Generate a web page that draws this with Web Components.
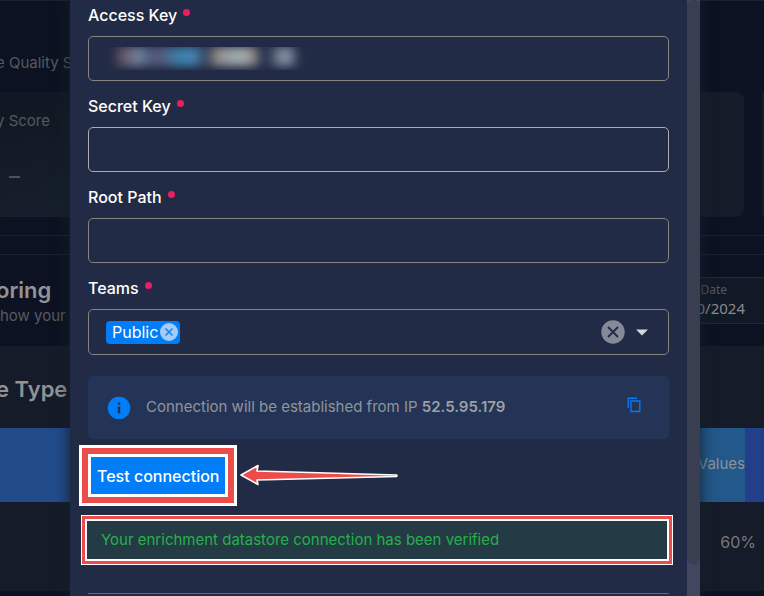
<!DOCTYPE html>
<html lang="en">
<head>
<meta charset="utf-8">
<title>Enrichment datastore</title>
<style>
  html, body { margin: 0; height: 100%; overflow: hidden; background: #0c1221; }
  body { font-family: Inter, "Liberation Sans", sans-serif; font-size: 16px; }
</style>
</head>
<body>
<app-shell>
  <dashboard-page slot="page"></dashboard-page>
  <modal-panel slot="dialog">
    <form-field name="access-key" label="Access Key" masked></form-field>
    <form-field name="secret-key" label="Secret Key" bright></form-field>
    <form-field name="root-path" label="Root Path"></form-field>
    <team-select label="Teams">Public</team-select>
    <info-note>Connection will be established from IP <b>52.5.95.179</b></info-note>
    <test-action>Test connection</test-action>
    <status-alert>Your enrichment datastore connection has been verified</status-alert>
  </modal-panel>
</app-shell>

<script>
const define = (name, html, setup) => {
  const template = document.createElement('template');
  template.innerHTML = html;
  customElements.define(name, class extends HTMLElement {
    connectedCallback() {
      if (this.shadowRoot) return;
      this.attachShadow({ mode: 'open' }).append(template.content.cloneNode(true));
      if (setup) setup(this, this.shadowRoot);
    }
  });
};

const labelStyle = `
  label { display: flex; align-items: center; gap: 6px; height: 24px; margin-bottom: 9px;
          color: #fff; font-size: 16px; font-weight: 500; line-height: 24px; }
  label i { width: 7px; height: 7px; border-radius: 50%; background: #ec1e62; margin-bottom: 6px; }`;

define('app-shell', `
  <style>
    :host { display: grid; height: 100vh; overflow: hidden; }
    ::slotted(*) { grid-area: 1 / 1; min-height: 0; min-width: 0; }
  </style>
  <slot name="page"></slot><slot name="dialog"></slot>`);

define('dashboard-page', `
  <style>
    :host { display: block; overflow: hidden; color: #6b6d73; background: #0c1221; white-space: nowrap;
            border-top: 1px solid #1b212e; }
    .row { display: flex; justify-content: space-between; align-items: center; }
    .title { height: 91px; box-sizing: border-box; padding-top: 32px; }
    .title, .card span { font-size: 15px; color: #55595f; }
    .title, .card span, h2 { text-indent: -4px; }
    .cards { display: grid; grid-template-columns: 1fr 2px; gap: 18px; height: 125px; }
    .card { border-radius: 0 8px 8px 0; display: flex; flex-direction: column; padding-top: 17px; background: #151b29; }
    .cards .card:first-child {
      background: linear-gradient(90deg, transparent 50%, #18232f 92%, #151b29 95%), linear-gradient(165deg, #101722, #1c2835 90%); }
    .card span { line-height: 24px; }
    .card em { width: 11px; height: 2px; background: #4d5259; margin: 43px 9px 0; }
    .rule { height: 18px; margin-top: 18px; border: solid #1b212e; border-width: 1px 0; }
    .head { height: 91px; }
    h2 { margin: 0; font-size: 22px; line-height: 28px; font-weight: 600; color: #929396; }
    p { margin: 0; font-size: 15px; line-height: 24px; color: #585b61; }
    .head > div:first-child { padding-top: 2px; }
    .date { box-sizing: border-box; height: 47px; width: 120px; padding: 4px 19px 0 0; text-align: right;
            border: solid #232a36; border-width: 1px 0; background: #121926;
            font-family: "Noto Sans", sans-serif; font-size: 15px; line-height: 20px; color: #8a8b8d; }
    .date small { display: block; padding-right: 18px; font-size: 12px; line-height: 16px; color: #55585f; }
    .kind { height: 82px; padding-top: 4px; box-sizing: border-box; background: #151b29; }
    .bar { height: 74px; background: linear-gradient(90deg, #224b8a 50%, #22588a 50%); color: #8d939d; justify-content: flex-end; }
    .bar span { font-size: 15px; padding-bottom: 4px; }
    .bar::after { content: ""; width: 19px; align-self: stretch; background: #223f8a; }
    .total { height: 89px; box-sizing: border-box; padding: 0 8px 9px 0; justify-content: flex-end; background: #151b29; color: #77797e; }
  </style>
  <div class="row title">e Quality Sc</div>
  <div class="cards"><div class="card"><span>y Score</span><em></em></div><div class="card"></div></div>
  <div class="rule"></div>
  <div class="row head"><div><h2>oring</h2><p>how your c</p></div><div class="date"><small>Date</small>0/2024</div></div>
  <div class="row kind"><h2>e Type</h2></div>
  <div class="row bar"><span>Values</span></div>
  <div class="row total">60%</div>`);

define('modal-panel', `
  <style>
    :host { display: flex; margin: 0 64px 0 70px; overflow: hidden; z-index: 1;
            background: #222b45; box-shadow: 0 0 14px #14202e; }
    main { flex: 1; min-width: 0; padding: 3px 18px 0; }
    footer { margin-top: 34px; border-top: 1px solid #646b80; }
    .bar { width: 13px; background: #40475f; }
    .bar div { height: calc(100% - 32px); border-radius: 6px; background: #393e50; }
  </style>
  <main><slot></slot><footer></footer></main>
  <div class="bar"><div></div></div>`);

define('form-field', `
  <style>
    :host { display: block; margin-bottom: 13px; }
    ${labelStyle}
    .box { position: relative; }
    input { display: block; width: 100%; height: 45px; box-sizing: border-box; padding: 0 18px; border: 1px solid #85847f;
            border-radius: 5px; background: transparent; color: #fff; font: inherit; outline: none; }
    :host([bright]) input { border-color: #adadae; }
    .mask { display: none; }
    :host([masked]) .mask { display: block; position: absolute; left: 18px; top: 11px; width: 200px; height: 23px; overflow: hidden; }
    .mask::before { content: ""; position: absolute; inset: 0 0 4px; filter: blur(4px);
      background: linear-gradient(90deg, transparent 3%, #655463 8%, #74849a 16%, #4e5c82 22%, #575676 26%, #3a83ad 37%, #4482b0 44%,
        #38405a 50%, #938d87 56%, #99a2a8 62%, #a3abaf 69%, #8b847f 74%, #293451 78%, #293451 81%, #7b8698 87%, #8491a5 91%, transparent 97%); }
  </style>
  <label for="c"><span></span><i></i></label>
  <div class="box"><input id="c"><div class="mask"></div></div>`,
  (host, root) => {
    root.querySelector('span').textContent = host.getAttribute('label');
    root.querySelector('input').name = host.getAttribute('name');
  });

define('team-select', `
  <style>
    :host { display: block; margin-bottom: 21px; }
    ${labelStyle}
    .box { display: flex; align-items: center; height: 46px; box-sizing: border-box; padding: 0 17px; border: 1px solid #85847f; border-radius: 5px; }
    .chip { display: flex; align-items: center; gap: 2px; height: 23px; padding: 0 2px 0 6px; border-radius: 4px; background: #007df7; color: #fff; line-height: 23px; }
    input { flex: 1; min-width: 0; border: 0; padding: 0; background: transparent; color: #fff; font: inherit; outline: none; }
    button { display: block; padding: 0; border: 0; background: none; }
    svg { display: block; }
    .clear { margin-right: 10px; }
    .open { margin-right: 2px; }
  </style>
  <label for="c"><span></span><i></i></label>
  <div class="box">
    <div class="chip"><slot></slot>
      <button aria-label="Remove"><svg width="18" height="18" viewBox="0 0 18 18"><circle cx="9" cy="9" r="9" fill="#a3cdf8"/><path d="M5.5 5.5l7 7m0-7l-7 7" stroke="#1680e6" stroke-width="1.5"/></svg></button>
    </div>
    <input id="c" role="combobox" aria-expanded="false">
    <button class="clear" aria-label="Clear"><svg width="24" height="24" viewBox="0 0 24 24"><circle cx="12" cy="12" r="11.7" fill="#858a98"/><path d="M7 7l10 10m0-10L7 17" stroke="#222b45" stroke-width="1.8"/></svg></button>
    <button class="open" aria-label="Open"><svg width="14" height="8" viewBox="0 0 14 8"><path d="M1 1.500h12L7 7.500z" fill="#d5d7dd"/></svg></button>
  </div>`,
  (host, root) => { root.querySelector('span').textContent = host.getAttribute('label'); });

define('info-note', `
  <style>
    :host { display: flex; align-items: center; gap: 15px; height: 63px; box-sizing: border-box; padding: 0 28px 2px 19px; margin-bottom: 18px;
            border-radius: 5px; background: #243456; color: #919499; font-size: 15px; line-height: 24px; }
    ::slotted(b) { font-weight: 600; color: #9da0a5; }
    p { flex: 1; margin: 0; }
    button { display: block; padding: 0 0 3px; border: 0; background: none; }
    svg { display: block; }
  </style>
  <svg width="24" height="24" viewBox="0 0 24 24"><circle cx="12" cy="13" r="11.300" fill="#007df7"/><path d="M10.800 7.600h2.400v2.200h-2.400zM10.800 11.500h2.400V18.500h-2.400z" fill="#243456"/></svg>
  <p><slot></slot></p>
  <button aria-label="Copy"><svg width="14" height="16" viewBox="0 0 14 16" fill="none" stroke="#0878f0" stroke-width="1.4"><path d="M1.200 11V1.200H10"/><path d="M3.900 4H12.800V14.500H3.900z"/></svg></button>`);

define('test-action', `
  <style>
    :host { display: flex; align-items: center; gap: 14px; margin: 0 3px 27px; }
    button { height: 37px; padding: 0 6px; border: 0; background: #007df7; color: #fff; font: inherit; font-weight: 500; white-space: nowrap;
             box-shadow: 0 0 0 3px #fff, 0 0 0 9px #ec4d4b, 0 0 0 12px #fff; }
    svg { display: block; }
  </style>
  <button type="button"><slot></slot></button>
  <svg width="160" height="24" viewBox="0 0 160 24"><path d="M2 11L19 1.500L18 7L157.500 11Q158.500 11.700 157.500 12.500L18 16L19 20.500Z" fill="#ec4d4b" stroke="#fff" stroke-width="1.6" stroke-linejoin="round"/></svg>`);

define('status-alert', `
  <style>
    :host { display: block; margin: 0 2px 0 -1px; padding: 7px 14px; background: #243b46; color: #26b04b; font-size: 15px; line-height: 24px;
            box-shadow: 0 0 0 2px #fff, 0 0 0 5px #ec4d4b, 0 0 0 6px #fff; }
  </style>
  <slot></slot>`);
</script>
</body>
</html>
